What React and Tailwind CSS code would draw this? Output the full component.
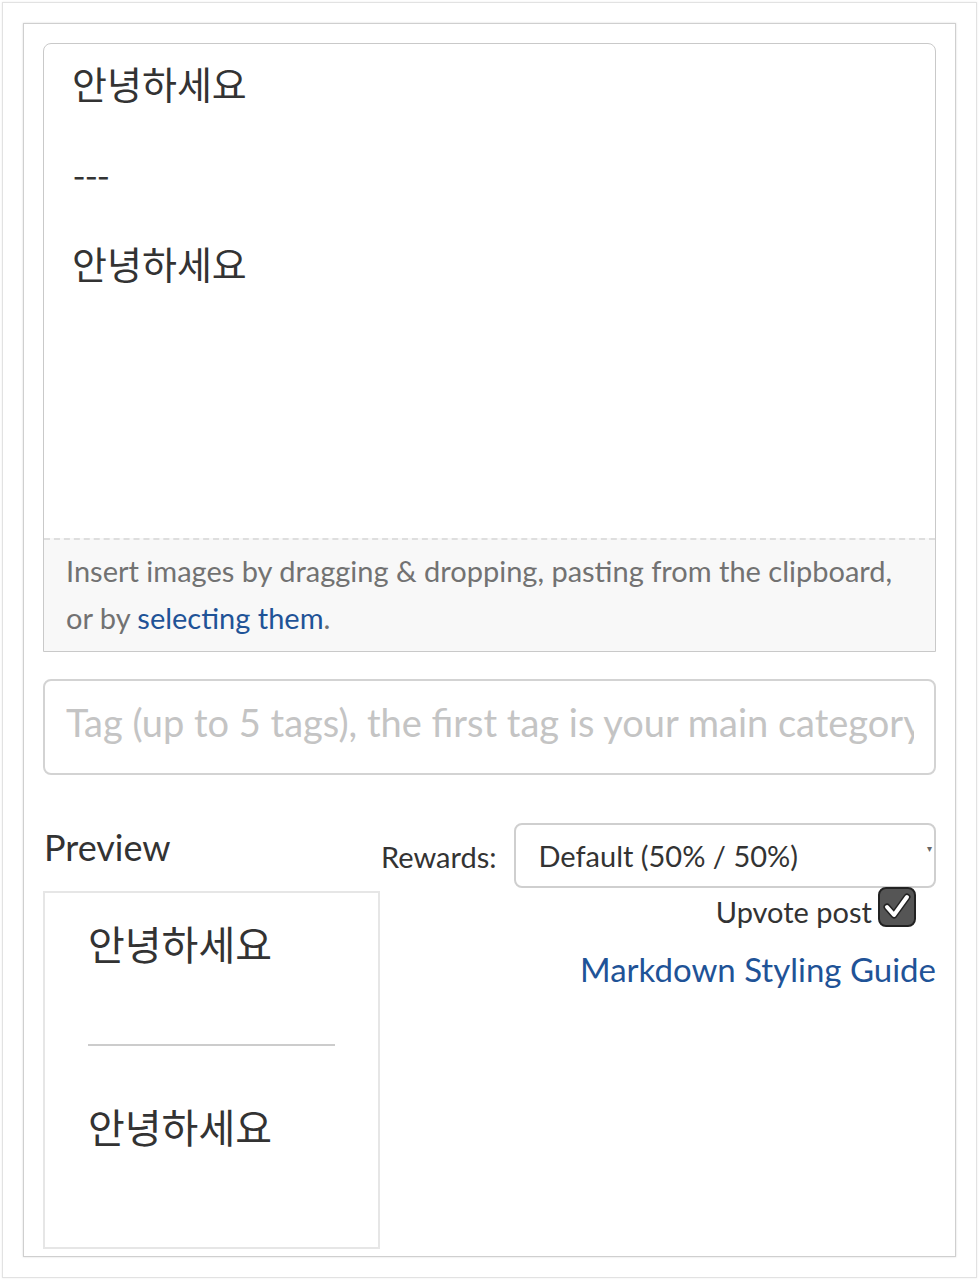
export default function App() {
  const sans = { fontFamily: 'Lato, "Noto Sans CJK KR", sans-serif' };
  const kr = { fontFamily: '"Noto Sans CJK KR", Lato, sans-serif' };
  return (
    <div className="w-[979px] h-[1280px] bg-white p-[2px]" style={sans}>
      <div className="h-full border border-[#e2e2e2] p-[20px] shadow-[0_0_2px_rgba(0,0,0,0.08)]">
        <div className="h-full border border-[#cfcfcf] shadow-[0_0_2px_rgba(0,0,0,0.15)] px-[19px] pt-[19px] flex flex-col">
          {/* Editor */}
          <div className="border border-[#c9c9c9] rounded-t-[8px] bg-white">
            <div className="h-[494px] px-[28px] pt-[16px] text-[38px] leading-[45px] text-[#333]" style={kr}>
              <div>안녕하세요</div>
              <div>&nbsp;</div>
              <div className="pl-[1px] text-[35px]">---</div>
              <div>&nbsp;</div>
              <div>안녕하세요</div>
            </div>
            <div className="h-[113px] border-t-2 border-dashed border-[#dedede] bg-[#f8f8f8] px-[22px] pt-[7px] text-[29px] leading-[47px] text-[#727272]">
              Insert images by dragging &amp; dropping, pasting from the clipboard,
              <br />
              or by <a className="text-[#1f5397]">selecting them</a>.
            </div>
          </div>

          {/* Tag input */}
          <div className="mt-[27px] h-[96px] border-2 border-[#d3d3d3] rounded-[8px] flex items-center pl-[21px] pr-[20px] pb-[10px] overflow-hidden">
            <span className="text-[38px] text-[#c4c4c4] whitespace-nowrap overflow-hidden">
              Tag (up to 5 tags), the first tag is your main category
            </span>
          </div>

          {/* Bottom row */}
          <div className="flex mt-[48px]">
            <div className="w-[337px] shrink-0">
              <div className="text-[36px] leading-[48px] text-[#333] pl-[1px]">Preview</div>
              <div className="mt-[20px] h-[358px] border-2 border-[#e6e6e6] px-[43px] pt-[24px]" style={kr}>
                <div className="text-[40px] leading-[52px] text-[#333]">안녕하세요</div>
                <div className="mt-[75px] border-t-2 border-[#cccccc]" />
                <div className="mt-[54px] text-[40px] leading-[52px] text-[#333]">안녕하세요</div>
              </div>
            </div>
            <div className="flex-1 flex flex-col items-end">
              <div className="flex items-center w-full pl-[1px]">
                <span className="text-[29px] text-[#333] mr-[18px] mt-[2px]">Rewards:</span>
                <div className="flex-1 h-[65px] border-2 border-[#cfcfcf] rounded-[8px] flex items-center pl-[22px] pr-[2px]">
                  <span className="text-[29px] text-[#333] flex-1">Default (50% / 50%)</span>
                  <span className="text-[10px] text-[#666] -mt-[14px]">▾</span>
                </div>
              </div>
              <div className="flex items-center -mt-[8px] mr-[20px]">
                <span className="text-[29px] text-[#333] mr-[6px] mt-[10px]">Upvote post</span>
                <span className="w-[38px] h-[40px] rounded-[8px] bg-[#555] border-2 border-[#222] flex items-center justify-center">
                  <svg width="30" height="30" viewBox="0 0 30 30">
                    <path d="M5 15 L12 23 L25 5" fill="none" stroke="#222" strokeWidth="7" strokeLinejoin="round" strokeLinecap="round" />
                    <path d="M5 15 L12 23 L25 5" fill="none" stroke="#fff" strokeWidth="4" strokeLinejoin="round" strokeLinecap="round" />
                  </svg>
                </span>
              </div>
              <a className="mt-[11px] text-[33px] text-[#1f5397]">Markdown Styling Guide</a>
            </div>
          </div>
        </div>
      </div>
    </div>
  );
}
